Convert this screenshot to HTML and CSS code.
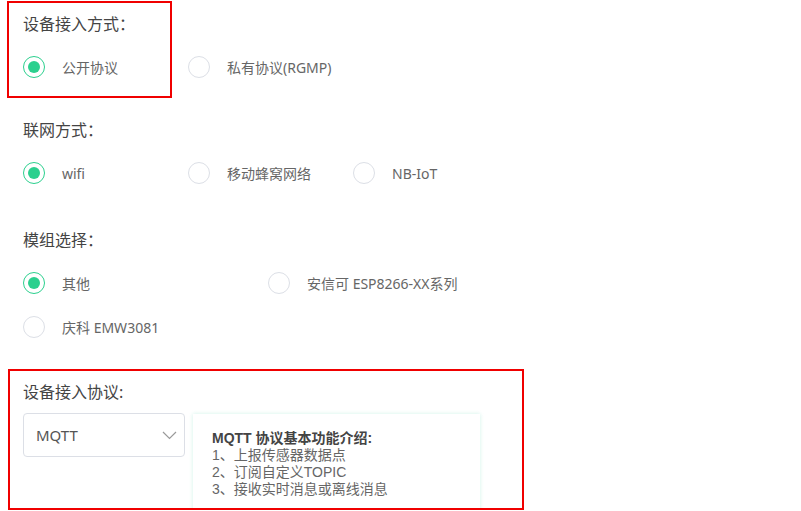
FILE: index.html
```html
<!DOCTYPE html>
<html lang="zh-CN">
<head>
<meta charset="utf-8">
<title>设备接入</title>
<link rel="stylesheet" href="styles.css">
</head>
<body>
<div class="page">
  <section class="group marked first">
    <div class="title">设备接入方式：</div>
    <div class="options">
      <label class="option"><span class="radio checked"></span><span class="text">公开协议</span></label>
      <label class="option"><span class="radio"></span><span class="text">私有协议(RGMP)</span></label>
    </div>
  </section>

  <section class="group second">
    <div class="title">联网方式：</div>
    <div class="options">
      <label class="option"><span class="radio checked"></span><span class="text">wifi</span></label>
      <label class="option"><span class="radio"></span><span class="text">移动蜂窝网络</span></label>
      <label class="option"><span class="radio"></span><span class="text">NB-IoT</span></label>
    </div>
  </section>

  <section class="group third">
    <div class="title">模组选择：</div>
    <div class="options wide">
      <label class="option"><span class="radio checked"></span><span class="text">其他</span></label>
      <label class="option"><span class="radio"></span><span class="text">安信可 ESP8266-XX系列</span></label>
      <label class="option"><span class="radio"></span><span class="text">庆科 EMW3081</span></label>
    </div>
  </section>

  <section class="group marked protocol">
    <div class="title">设备接入协议:</div>
    <div class="proto-row">
      <div class="select">
        <span class="select-value">MQTT</span>
        <svg class="chevron" width="15" height="9" viewBox="0 0 15 9"><polyline points="1,1 7.5,7.5 14,1" fill="none" stroke="#9a9a9a" stroke-width="1.2"/></svg>
      </div>
      <div class="card">
        <div class="card-title">MQTT 协议基本功能介绍:</div>
        <div class="card-line">1、上报传感器数据点</div>
        <div class="card-line">2、订阅自定义TOPIC</div>
        <div class="card-line">3、接收实时消息或离线消息</div>
      </div>
    </div>
  </section>
</div>
</body>
</html>
```

FILE: styles.css
```css
* { box-sizing: border-box; }
html, body { margin: 0; padding: 0; background: #fff; }
body {
  font-family: "Noto Sans", "Noto Sans CJK SC", sans-serif;
  color: #444;
}
.page {
  padding: 1px 0 0 7px;
}
.group {
  border: 2px solid transparent;
  padding: 9px 14px 7px 14px;
}
.group.marked { border-color: #f00000; }
.group.first { width: 165px; }
.group.second { margin-top: 9px; }
.group.third { margin-top: 13px; }
.group.protocol {
  margin-top: 11px;
  margin-left: 1px;
  padding-left: 13px;
  width: 516px;
  height: 141px;
  overflow: hidden;
  padding-bottom: 0;
}
.title {
  font-family: "Noto Sans", "Noto Sans CJK TC", sans-serif;
  font-size: 16px;
  line-height: 24px;
  height: 24px;
  color: #444;
  white-space: nowrap;
  margin-bottom: 9px;
}
.options {
  display: flex;
  flex-wrap: wrap;
  width: 600px;
}
.options.wide { width: 490px; }
.option {
  flex: none;
  width: 165px;
  height: 44px;
  display: flex;
  align-items: center;
  gap: 17px;
  white-space: nowrap;
}
.options.wide .option { width: 245px; }
.radio {
  flex: none;
  width: 22px;
  height: 22px;
  border-radius: 50%;
  border: 1px solid #dcdfe6;
  display: flex;
  align-items: center;
  justify-content: center;
  background: #fff;
}
.radio.checked {
  border: 1.5px solid #2bd08e;
}
.radio.checked::after {
  content: "";
  width: 12px;
  height: 12px;
  border-radius: 50%;
  background: #2bd08e;
}
.text {
  font-size: 14px;
  color: #666;
}
.proto-row {
  display: flex;
  align-items: flex-start;
  gap: 8px;
}
.select {
  flex: none;
  width: 162px;
  height: 44px;
  border: 1px solid #dcdfe6;
  border-radius: 4px;
  display: flex;
  align-items: center;
  justify-content: space-between;
  padding: 0 7px 0 12px;
  font-size: 15px;
  color: #555;
}
.chevron { display: block; }
.card {
  flex: none;
  margin-top: 1px;
  width: 287px;
  height: 110px;
  padding: 16px 19px;
  background: #fff;
  box-shadow: 0 0 4px rgba(40, 200, 150, 0.22);
  font-family: "Liberation Sans", "Noto Sans CJK SC", sans-serif;
  font-size: 14px;
  line-height: 17px;
  color: #666;
}
.card-title {
  font-weight: bold;
  color: #444;
}
```
